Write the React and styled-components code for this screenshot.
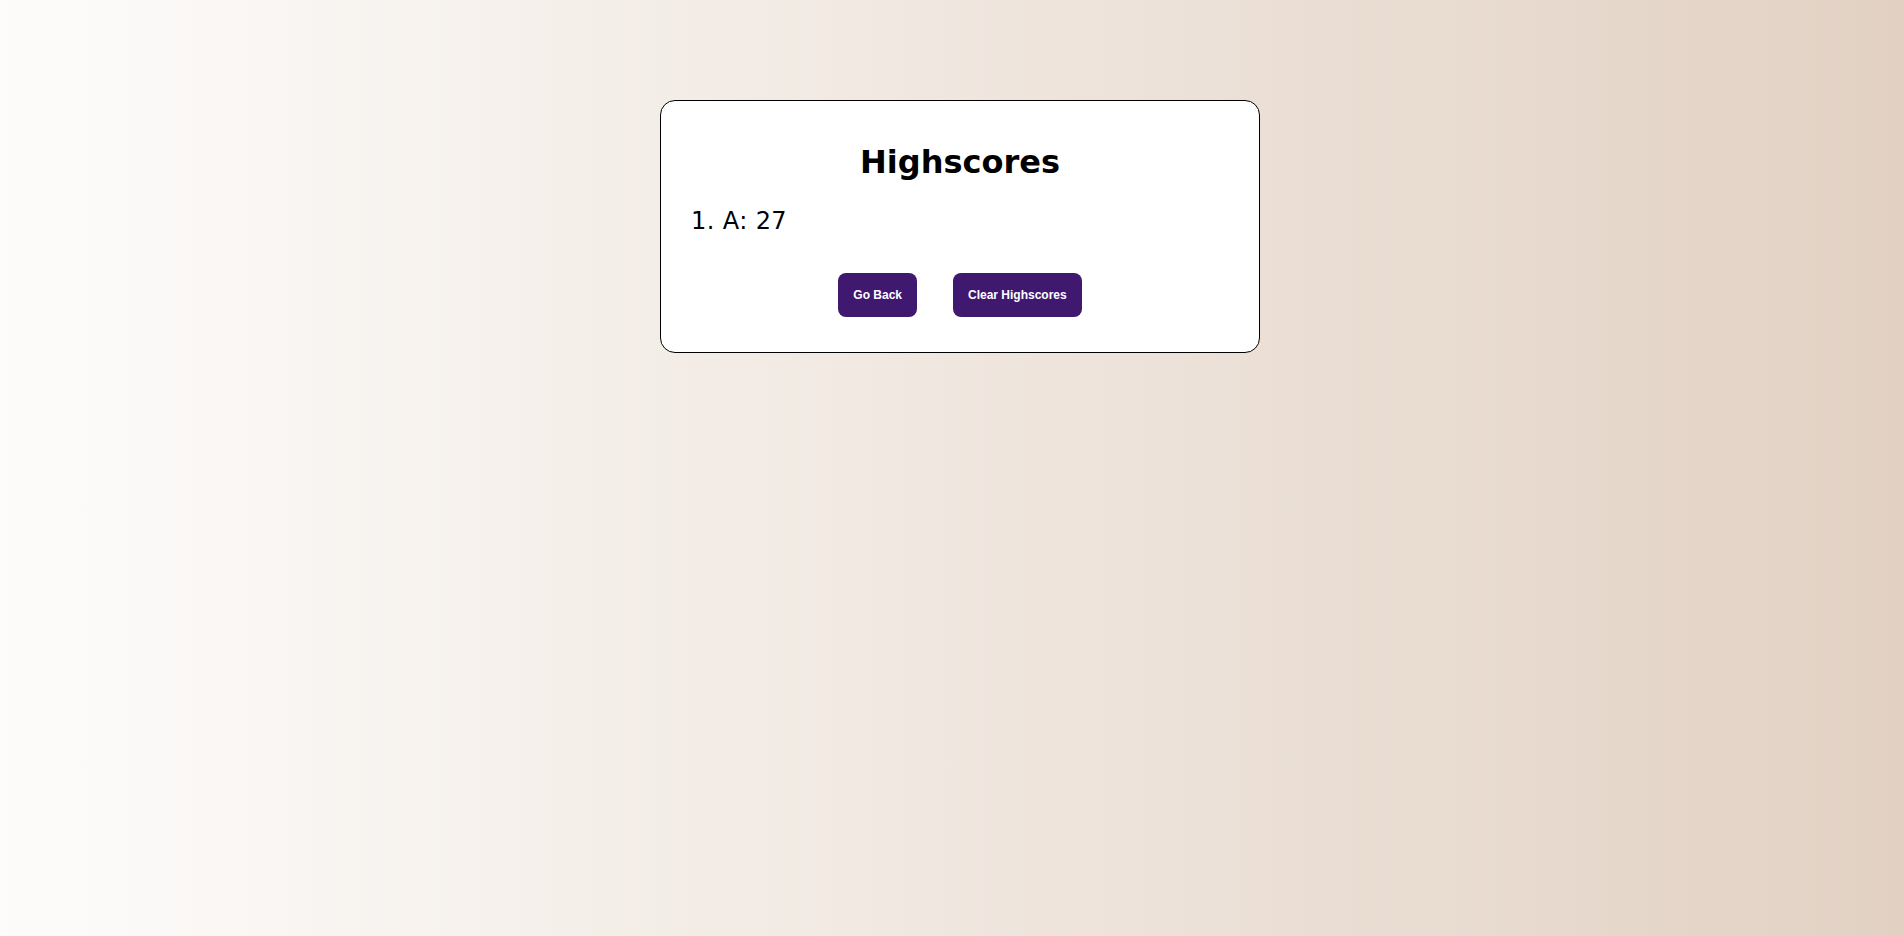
import React from "react";
import styled, { createGlobalStyle } from "styled-components";

const GlobalStyle = createGlobalStyle`
  html, body {
    margin: 0;
    min-height: 100%;
  }
  body {
    min-height: 100vh;
    background: linear-gradient(to right, #fdfcfb 0%, #e2d1c3 100%);
    font-family: "DejaVu Sans", Verdana, sans-serif;
  }
  *, *::before, *::after {
    box-sizing: border-box;
  }
`;

const Page = styled.div`
  display: flex;
  justify-content: center;
  padding: 100px 0 0 17px;
`;

const Card = styled.section`
  width: 600px;
  background: #fff;
  border: 1px solid #000;
  border-radius: 15px;
  padding: 0 20px 35px;
  display: flex;
  flex-direction: column;
`;

const Title = styled.h1`
  margin: 43px 0 0;
  font-size: 32px;
  font-weight: bold;
  text-align: center;
  line-height: 37px;
`;

const ScoreList = styled.ol`
  list-style: none;
  margin: 26px 0 0;
  padding: 0 0 0 10px;
`;

const Score = styled.li`
  font-size: 24px;
  line-height: 28px;
  letter-spacing: 0.4px;
  color: #000;
`;

const Actions = styled.div`
  display: flex;
  justify-content: center;
  gap: 36px;
  margin-top: 38px;
`;

const Button = styled.button`
  background: #41186f;
  color: #fff;
  border: none;
  border-radius: 8px;
  padding: 15px;
  font-family: "Liberation Sans", Arial, sans-serif;
  font-size: 12px;
  font-weight: bold;
  line-height: 14px;
  cursor: pointer;
`;

const scores = [{ name: "A", score: 27 }];

export default function App() {
  return (
    <>
      <GlobalStyle />
      <Page>
        <Card>
          <Title>Highscores</Title>
          <ScoreList>
            {scores.map((s, i) => (
              <Score key={i}>
                {i + 1}. {s.name}: {s.score}
              </Score>
            ))}
          </ScoreList>
          <Actions>
            <Button>Go Back</Button>
            <Button>Clear Highscores</Button>
          </Actions>
        </Card>
      </Page>
    </>
  );
}
